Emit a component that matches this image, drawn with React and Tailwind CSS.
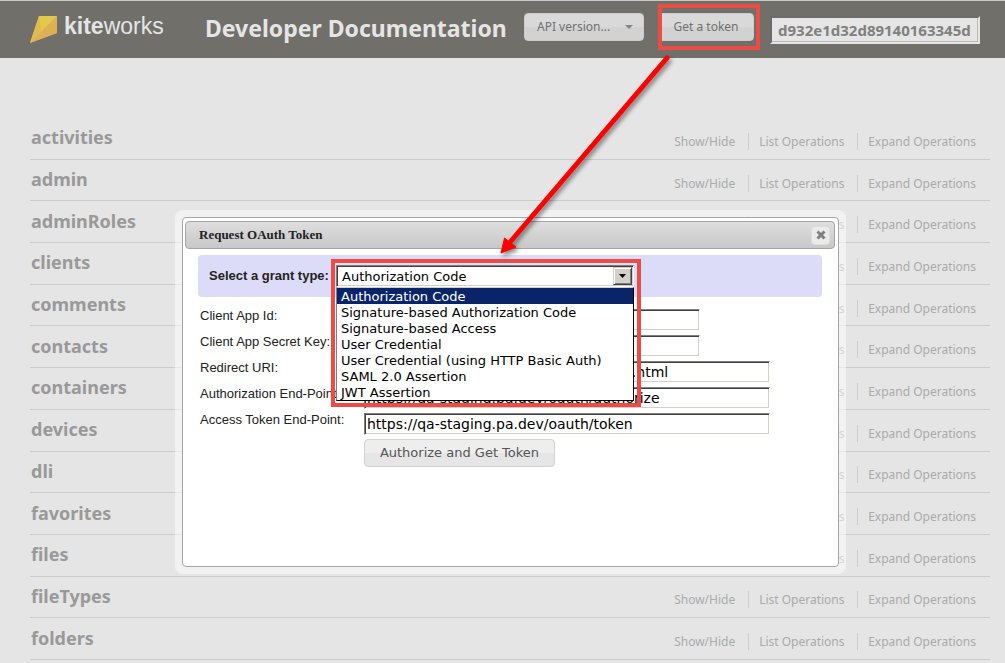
import React from "react";

const resources = [
  "activities", "admin", "adminRoles", "clients", "comments", "contacts", "containers",
  "devices", "dli", "favorites", "files", "fileTypes", "folders",
];

const grantTypes = [
  "Authorization Code",
  "Signature-based Authorization Code",
  "Signature-based Access",
  "User Credential",
  "User Credential (using HTTP Basic Auth)",
  "SAML 2.0 Assertion",
  "JWT Assertion",
];

const fields = [
  { id: "client-id", label: "Client App Id:", value: "", width: "w-[336px]" },
  { id: "client-secret", label: "Client App Secret Key:", value: "", width: "w-[336px]" },
  { id: "redirect-uri", label: "Redirect URI:", value: "https://qa-staging.pa.dev/api/callback.html", width: "w-[406px]" },
  { id: "auth-endpoint", label: "Authorization End-Point:", value: "https://qa-staging.pa.dev/oauth/authorize", width: "w-[406px]" },
  { id: "token-endpoint", label: "Access Token End-Point:", value: "https://qa-staging.pa.dev/oauth/token", width: "w-[406px]" },
];

const sunken =
  "border border-t-[#808080] border-l-[#808080] border-r-white border-b-white shadow-[inset_1px_1px_0_#404040,inset_-1px_-1px_0_#d4d0c8]";

function Logo() {
  return (
    <a href="#home" className="flex w-[175px] items-start gap-[7px] text-[#e5e5e5]">
      <svg width="27" height="27" viewBox="0 0 27 27" aria-hidden="true">
        <path d="M9 0H27V17L0 27Z" fill="#deb650" />
        <path d="M9 0H27L0 27Z" fill="#dfbb50" />
        <path d="M9 0H27L11 16Z" fill="#e1c84e" />
        <path d="M27 0V17L0 27Z" fill="#dcb153" />
      </svg>
      <span className="font-['Liberation_Sans',sans-serif] text-[23px] leading-5">
        <b>kite</b>works
      </span>
    </a>
  );
}

function Header() {
  return (
    <header className="flex h-[58px] items-start border-t border-[#c9cac2] bg-[#706f69] pl-[30px] pr-[25px] font-['Noto_Sans',sans-serif]">
      <div className="pt-[15px]"><Logo /></div>
      <h1 className="flex-1 whitespace-nowrap pt-[11px] text-[23px] leading-[32px] font-bold text-[#e5e5e5]">
        Developer Documentation
      </h1>
      <button className="mt-3 flex h-7 w-[120px] items-center justify-between rounded-[4px] border border-[#cccccc] bg-linear-to-b from-[#d9d9d9] from-50% to-[#d2d2d2] to-50% pr-[10px] pl-3 text-[12px] text-[#707070]">
        API version...
        <svg width="8" height="5" viewBox="0 0 8 5" aria-hidden="true"><path d="M0 0H8L4 4Z" fill="#858585" /></svg>
      </button>
      <div className="relative mt-3 ml-[14px]">
        <button className="h-7 w-24 rounded-[4px] border border-[#cccccc] bg-linear-to-b from-[#d9d9d9] from-50% to-[#d2d2d2] to-50% text-[12px] text-[#707070]">
          Get a token
        </button>
        <div className="pointer-events-none absolute -inset-y-[9px] -right-[6px] left-0 border-4 border-[#ec4c44]" />
      </div>
      <input
        aria-label="Access token"
        readOnly
        defaultValue="d932e1d32d89140163345d"
        className="mt-[15px] ml-4 h-7 w-[210px] border-2 border-t-[#6b6b6b] border-l-[#6b6b6b] border-r-[#e5e5e5] border-b-[#e5e5e5] bg-[#e5e5e5] px-[6px] text-[15px] font-bold text-[#808080] shadow-[inset_-1px_-1px_0_#bebcb6]"
      />
    </header>
  );
}

function ResourceList() {
  return (
    <ul className="mr-[15px] ml-[30px] mt-[60px] grid min-h-[542px] auto-rows-fr font-['Noto_Sans',sans-serif]">
      {resources.map((name) => (
        <li key={name} className="flex items-center justify-between border-b border-[#cccccc]">
          <h2 className="pb-[2px] pl-px text-[18px] leading-6 font-bold text-[#999999]">
            <a href={"#" + name}>{name}</a>
          </h2>
          <div className="flex pt-[6px] pr-[14px] text-[12px] leading-[17px] text-[#aaaaaa]">
            <a href="#toggle" className="w-[75px] border-r border-[#cccccc]">Show/Hide</a>
            <a href="#list" className="w-[109px] border-r border-[#cccccc] pl-[10px]">List Operations</a>
            <a href="#expand" className="pl-[10px]">Expand Operations</a>
          </div>
        </li>
      ))}
    </ul>
  );
}

function GrantSelect() {
  return (
    <div className="relative w-[298px]">
      <select
        id="grant"
        className={"block h-[22px] w-full appearance-none bg-white pt-px pl-[5px] font-['DejaVu_Sans',sans-serif] text-[13px] leading-4 text-black " + sunken}
      >
        {grantTypes.map((g) => <option key={g}>{g}</option>)}
      </select>
      <span className="pointer-events-none absolute top-[2px] right-[2px] flex h-[18px] w-[19px] items-center justify-center border border-t-[#d4d0c8] border-l-[#d4d0c8] border-r-[#404040] border-b-[#404040] bg-[#d4d0c8] shadow-[inset_1px_1px_0_white,inset_-1px_-1px_0_#808080]">
        <svg width="7" height="4" viewBox="0 0 7 4" aria-hidden="true"><path d="M0 0H7L3.500 4Z" fill="black" /></svg>
      </span>
      <ul
        role="listbox"
        aria-label="Grant types"
        className="absolute top-[22px] left-0 z-10 w-full border border-t-[#d4d0c8] border-l-[#808080] border-r-black border-b-black bg-white font-['DejaVu_Sans',sans-serif] text-[13px] leading-4 text-black"
      >
        {grantTypes.map((g, i) => (
          <li
            key={g}
            role="option"
            aria-selected={i === 0}
            className={"h-4 pt-px pl-1 whitespace-nowrap " + (i === 0 ? "bg-[#0a246a] text-white" : "")}
          >
            {g}
          </li>
        ))}
      </ul>
      <div className="pointer-events-none absolute -top-[6px] -left-[5px] z-20 h-[148px] w-[310px] border-4 border-[#ec4c44]" />
    </div>
  );
}

function TokenDialog() {
  return (
    <div className="absolute top-[210px] left-[175px] w-[671px] rounded-[8px] bg-white/50 p-[7px] font-['Liberation_Sans',sans-serif]">
      <section role="dialog" aria-label="Request OAuth Token" className="min-h-[350px] rounded-[4px] border border-[#a5a5a5] bg-white p-[3px] pl-[2px]">
        <div className="flex h-7 items-center justify-between rounded-[4px] border border-[#a5a5a5] bg-linear-to-b from-[#dedede] to-[#c8c8c8] pr-1 pl-[13px]">
          <h2 className="font-['Liberation_Serif',serif] text-[13px] font-bold text-[#222222]">Request OAuth Token</h2>
          <button aria-label="Close" className="flex size-[19px] items-center justify-center rounded-[4px] border border-[#dddddd] bg-[#ebebeb]">
            <svg width="10" height="10" viewBox="0 0 10 10" aria-hidden="true">
              <path d="M1.500 1.500L8.500 8.500M8.500 1.500L1.500 8.500" stroke="#808080" strokeWidth="3" />
            </svg>
          </button>
        </div>
        <form className="mt-[6px] pr-[13px] pl-[13px] text-[13px] text-[#222222]">
          <div className="flex h-[42px] items-center rounded-[4px] bg-[#dcdcf8] pl-[11px]">
            <label htmlFor="grant" className="w-[127px] whitespace-nowrap font-bold">Select a grant type:</label>
            <GrantSelect />
          </div>
          <div className="mt-3 flex flex-col gap-1">
            {fields.map((f) => (
              <div key={f.id} className="flex h-[22px] items-center">
                <label htmlFor={f.id} className="w-[166px] pb-[9px] pl-[2px] leading-4 whitespace-nowrap">{f.label}</label>
                <input
                  id={f.id}
                  defaultValue={f.value}
                  className={"h-[22px] bg-white px-[2px] font-['DejaVu_Sans',sans-serif] text-[14px] text-black " + f.width + " " + sunken}
                />
              </div>
            ))}
          </div>
          <button
            type="button"
            className="mt-1 ml-[166px] h-7 w-[191px] rounded-[4px] border border-[#d3d3d3] bg-linear-to-b from-[#eeeeee] from-50% to-[#e6e6e6] to-50% font-['DejaVu_Sans',sans-serif] text-[13px] text-[#555555]"
          >
            Authorize and Get Token
          </button>
        </form>
      </section>
    </div>
  );
}

function Arrow() {
  return (
    <svg
      width="200" height="220" viewBox="490 45 200 220" aria-hidden="true"
      className="pointer-events-none absolute top-[45px] left-[490px] z-30 drop-shadow-[2px_3px_2px_rgba(0,0,0,0.45)]"
    >
      <path d="M667 58L511 241" stroke="#ff0000" strokeWidth="5" strokeLinecap="round" />
      <path d="M501 253L504.500 238L516 247Z" fill="#ff0000" stroke="#ff0000" strokeWidth="1" />
    </svg>
  );
}

export default function App() {
  return (
    <div className="relative min-h-screen bg-[#e5e5e5]">
      <Header />
      <main><ResourceList /></main>
      <TokenDialog />
      <Arrow />
    </div>
  );
}
